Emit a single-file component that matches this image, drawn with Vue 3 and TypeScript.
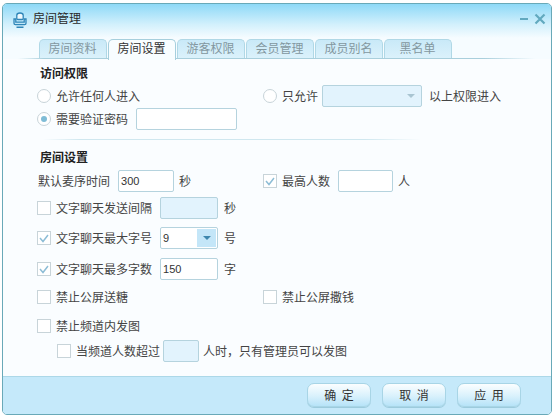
<script setup lang="ts">
const tabs = ['房间资料', '房间设置', '游客权限', '会员管理', '成员别名', '黑名单']
const activeTab = '房间设置'
const buttons = ['确定', '取消', '应用']
</script>

<template>
  <div class="window">
    <header class="title">
      <svg class="logo" width="14" height="16" viewBox="0 0 14 16" fill="none" stroke="#2f86b8" stroke-width="1.3">
        <path d="M3.800 6.400V3.200C3.800 1.800 5 1 7 1s3.200.8 3.200 2.200v3.200c0 .7-.4 1.100-1.100 1.100H4.900c-.7 0-1.100-.4-1.100-1.100z" fill="#eef9fe" />
        <path d="M1 7h1.800v3.200h8.400V7H13v4.300c0 .9-.5 1.400-1.400 1.400H2.400c-.9 0-1.400-.5-1.400-1.400z" fill="#bfe6f7" />
        <path d="M3.500 15.200h7" stroke-width="1.500" />
      </svg>
      <span>房间管理</span>
      <div class="controls">
        <svg width="12" height="12" viewBox="0 0 12 12"><path d="M1 6h8" stroke="#62a9bf" stroke-width="2" /></svg>
        <svg width="12" height="12" viewBox="0 0 12 12"><path d="M1.500 1.500l9 9M10.500 1.500l-9 9" stroke="#62a9bf" stroke-width="2.200" /></svg>
      </div>
    </header>

    <nav class="tabs">
      <div v-for="tab in tabs" :key="tab" class="tab" :class="{ active: tab === activeTab }">{{ tab }}</div>
    </nav>

    <main class="content">
      <h3 class="heading first">访问权限</h3>
      <div class="row two r1">
        <label class="opt"><span class="radio"></span>允许任何人进入</label>
        <label class="opt">
          <span class="radio"></span>只允许
          <span class="select disabled"><span class="arrow-wrap"><i class="arrow grey"></i></span></span>
          <span class="after">以上权限进入</span>
        </label>
      </div>
      <div class="row r2">
        <label class="opt"><span class="radio on"></span>需要验证密码</label>
        <span class="input pwd"></span>
      </div>
      <div class="divider"></div>

      <h3 class="heading second">房间设置</h3>
      <div class="row two r3">
        <div class="opt plain">默认麦序时间<span class="input w56 ml8">300</span><span class="unit">秒</span></div>
        <label class="opt">
          <span class="check"><svg width="12" height="12" viewBox="0 0 12 12"><path d="M2 6l3 3.500 5-6.500" fill="none" stroke="#8dbdd6" stroke-width="1.500" /></svg></span>最高人数
          <span class="input w55 ml8"></span><span class="unit">人</span>
        </label>
      </div>
      <div class="row r4">
        <label class="opt"><span class="check"></span>文字聊天发送间隔</label>
        <span class="input w58 fill ml8"></span><span class="unit ml6">秒</span>
      </div>
      <div class="row r5">
        <label class="opt"><span class="check"><svg width="12" height="12" viewBox="0 0 12 12"><path d="M2 6l3 3.500 5-6.500" fill="none" stroke="#8dbdd6" stroke-width="1.500" /></svg></span>文字聊天最大字号</label>
        <span class="select size ml8">9<span class="arrow-wrap blue"><i class="arrow"></i></span></span><span class="unit ml6">号</span>
      </div>
      <div class="row r6">
        <label class="opt"><span class="check"><svg width="12" height="12" viewBox="0 0 12 12"><path d="M2 6l3 3.500 5-6.500" fill="none" stroke="#8dbdd6" stroke-width="1.500" /></svg></span>文字聊天最多字数</label>
        <span class="input w58 ml8">150</span><span class="unit ml6">字</span>
      </div>
      <div class="row two r7">
        <label class="opt"><span class="check"></span>禁止公屏送糖</label>
        <label class="opt"><span class="check"></span>禁止公屏撒钱</label>
      </div>
      <div class="row r8">
        <label class="opt"><span class="check"></span>禁止频道内发图</label>
      </div>
      <div class="row r9">
        <label class="opt"><span class="check"></span>当频道人数超过</label>
        <span class="input w36 fill ml3"></span>
        <span class="tail">人时，只有管理员可以发图</span>
      </div>
    </main>

    <footer class="footer">
      <button v-for="b in buttons" :key="b" class="btn" type="button">{{ b[0] }} {{ b[1] }}</button>
    </footer>
  </div>
</template>

<style scoped>
.window {
  box-sizing: border-box;
  width: 550px;
  height: 412px;
  margin: 3px 0 0 2px;
  display: flex;
  flex-direction: column;
  overflow: hidden;
  border: 1px solid #69a9b8;
  border-radius: 5px;
  background: #fafdff;
  color: #444;
  font: 12px/16px "Noto Sans CJK SC", "Liberation Sans", sans-serif;
}

.title {
  height: 34px;
  box-sizing: border-box;
  flex: none;
  display: flex;
  align-items: center;
  padding: 0 0 7px 10px;
  background: linear-gradient(#8ed9f7, #d2f0fc 60%, #f6fcff);
  color: #2a2a2a;
}

.logo {
  margin-right: 6px;
  margin-top: 4px;
}

.controls {
  margin-left: auto;
  margin-right: 5px;
  margin-top: 2px;
  display: flex;
  gap: 3px;
}

.tabs {
  height: 21px;
  flex: none;
  display: flex;
  gap: 1px;
  padding-left: 36px;
  background: #f6fcff;
  position: relative;
}

.tabs::after {
  content: "";
  position: absolute;
  left: 15px;
  right: 16px;
  bottom: 0;
  height: 1px;
  background: linear-gradient(90deg, #f6fcff, #a9cfdc 5%, #a9cfdc 90%, #f6fcff);
}

.tab {
  box-sizing: border-box;
  width: 68px;
  height: 20px;
  margin-top: 1px;
  padding-right: 1px;
  text-align: center;
  color: #83979f;
  background: linear-gradient(#c9e9f8, #dcf2fb);
  border: 1px solid #b0d8e6;
  border-bottom: 0;
  border-radius: 5px 5px 0 0;
}

.tab.active {
  height: 21px;
  color: #333;
  background: #f8fdff;
  border-color: #a6cfdd;
  position: relative;
  z-index: 1;
}

.content {
  flex: 1;
  padding: 0 0 0 34px;
}

.heading {
  margin: 0;
  height: 16px;
  padding-left: 3px;
  font-size: 12px;
  line-height: 15px;
  font-weight: 700;
  color: #222;
}

.heading.first { margin-top: 6px; }
.heading.second { margin-top: 9px; }

.row {
  height: 22px;
  display: flex;
  align-items: center;
}

.row.two {
  display: grid;
  grid-template-columns: 226px 1fr;
}

.r1 { margin-top: 4px; }
.r2 { margin-top: 1px; }
.r3 { margin-top: 5px; }
.r4 { margin-top: 5px; }
.r5 { margin-top: 8px; }
.r6 { margin-top: 9px; }
.r7 { margin-top: 6px; }
.r8 { margin-top: 7px; }
.r9 { margin-top: 3px; padding-left: 20px; }

.divider {
  height: 1px;
  margin: 9px 0 0 6px;
  width: 378px;
  background: linear-gradient(90deg, #fafdff, #cfe7ef 10%, #cfe7ef 85%, #fafdff);
}

.opt {
  display: flex;
  align-items: center;
  height: 22px;
}

.opt.plain {
  padding-left: 1px;
}

.radio,
.check {
  box-sizing: border-box;
  flex: none;
  width: 14px;
  height: 14px;
  margin-right: 5px;
  border: 1px solid #c8d4d9;
  background: #fff;
  display: flex;
  align-items: center;
  justify-content: center;
}

.radio {
  border-radius: 50%;
}

.radio.on::after {
  content: "";
  width: 6px;
  height: 6px;
  border-radius: 50%;
  background: #7fbcd6;
}

.input,
.select {
  box-sizing: border-box;
  height: 22px;
  display: inline-flex;
  align-items: center;
  padding-left: 2px;
  border: 1px solid #b5d3de;
  border-radius: 2px;
  background: #fff;
  color: #333;
  font-family: "Liberation Sans", sans-serif;
  font-size: 11px;
}

.pwd { width: 101px; margin-left: 8px; }
.w55 { width: 55px; }
.w56 { width: 56px; }
.w58 { width: 58px; }
.w36 { width: 36px; }
.fill { background: #e2f3fd; }
.ml3 { margin-left: 3px; }
.ml8 { margin-left: 8px; }

.unit {
  margin-left: 5px;
}

.unit.ml6 {
  margin-left: 6px;
}

.tail {
  margin-left: 4px;
}

.after {
  margin-left: 7px;
}

.select {
  justify-content: space-between;
  padding: 0 1px 0 2px;
}

.select.disabled {
  width: 100px;
  margin-left: 4px;
  background: #e2f3fd;
}

.select.size {
  width: 58px;
}

.arrow-wrap {
  width: 19px;
  height: 18px;
  margin-left: auto;
  display: flex;
  align-items: center;
  justify-content: center;
}

.arrow-wrap.blue {
  background: #c4e6f8;
}

.arrow {
  width: 0;
  height: 0;
  border-left: 4px solid transparent;
  border-right: 4px solid transparent;
  border-top: 4px solid #3f87ad;
}

.arrow.grey {
  border-top-color: #a9c5d2;
}

.footer {
  height: 38px;
  flex: none;
  box-sizing: border-box;
  display: flex;
  justify-content: flex-end;
  gap: 11px;
  padding: 6px 30px 0 0;
  background: #c5e9fa;
  border-top: 1px solid #acd8e8;
}

.btn {
  width: 64px;
  height: 24px;
  padding: 0;
  border: 1px solid #a8d5e6;
  border-radius: 7px;
  background: linear-gradient(#fbfeff, #d9f1fc 55%, #b6e3f8);
  box-shadow: 0 1px 0 #9ccbdd;
  color: #333;
  font: inherit;
  word-spacing: 3px;
  cursor: pointer;
}
</style>

<style>
html,
body {
  background: #fff;
}
</style>
